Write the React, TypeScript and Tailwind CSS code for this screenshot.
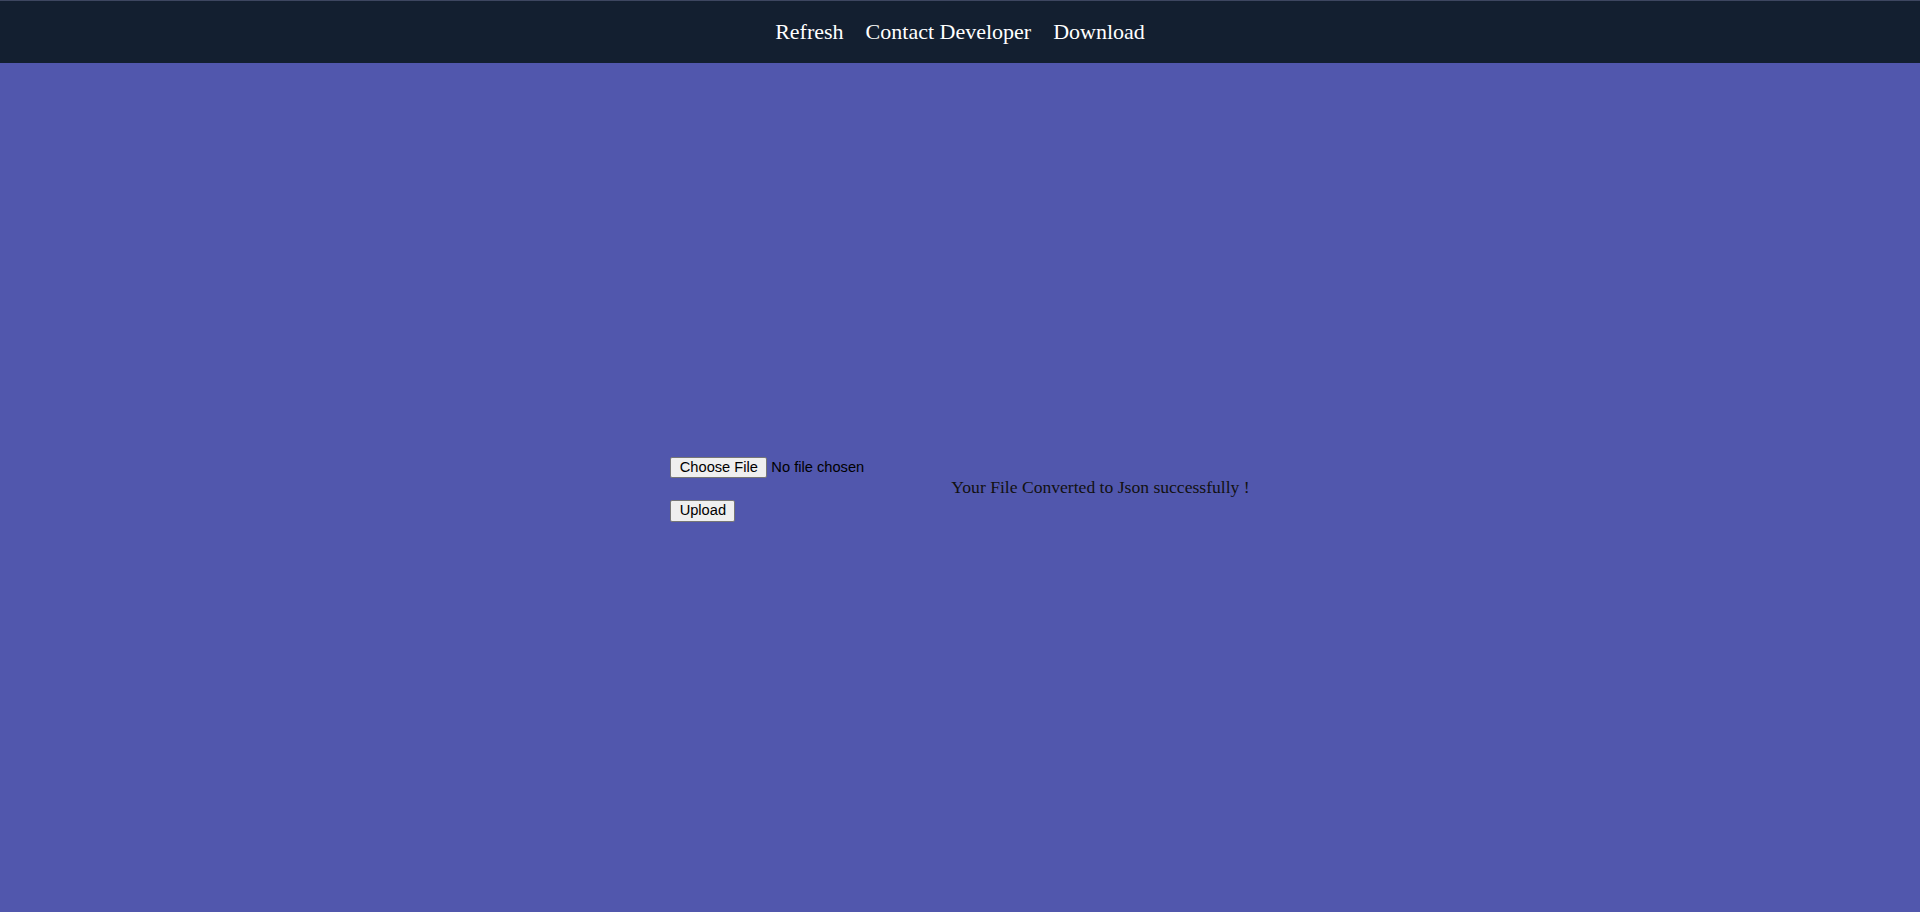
import React from "react";

export default function App() {
  return (
    <div className="min-h-[912px] h-[912px] flex flex-col bg-[#5157ad]">
      <header className="h-[63px] shrink-0 bg-[#131f30] border-t border-t-[#3d4660] flex items-center justify-center">
        <nav className="flex items-center gap-[22px] text-[22px] text-white [font-family:'Liberation_Serif',serif] pb-[2px]">
          <a className="cursor-pointer">Refresh</a>
          <a className="cursor-pointer">Contact Developer</a>
          <a className="cursor-pointer">Download</a>
        </nav>
      </header>
      <main className="flex-1 flex items-center justify-center">
        <form className="w-[281px] mt-[3px] flex flex-col items-start gap-[22px] [font-family:Arial,'Liberation_Sans',sans-serif] text-[14.67px] text-black">
          <div className="flex items-center">
            <span className="h-[21px] w-[97px] flex items-center justify-center bg-[#efefef] border border-[#767676] rounded-[2px] leading-none">
              Choose File
            </span>
            <span className="ml-[4px] leading-none">No file chosen</span>
          </div>
          <span className="h-[22px] w-[65px] flex items-center justify-center bg-[#efefef] border border-[#767676] rounded-[2px] leading-none">
            Upload
          </span>
        </form>
        <p className="text-[17.6px] text-[#111] [font-family:'Liberation_Serif',serif] mt-[-1px]">
          Your File Converted to Json successfully !
        </p>
      </main>
    </div>
  );
}
